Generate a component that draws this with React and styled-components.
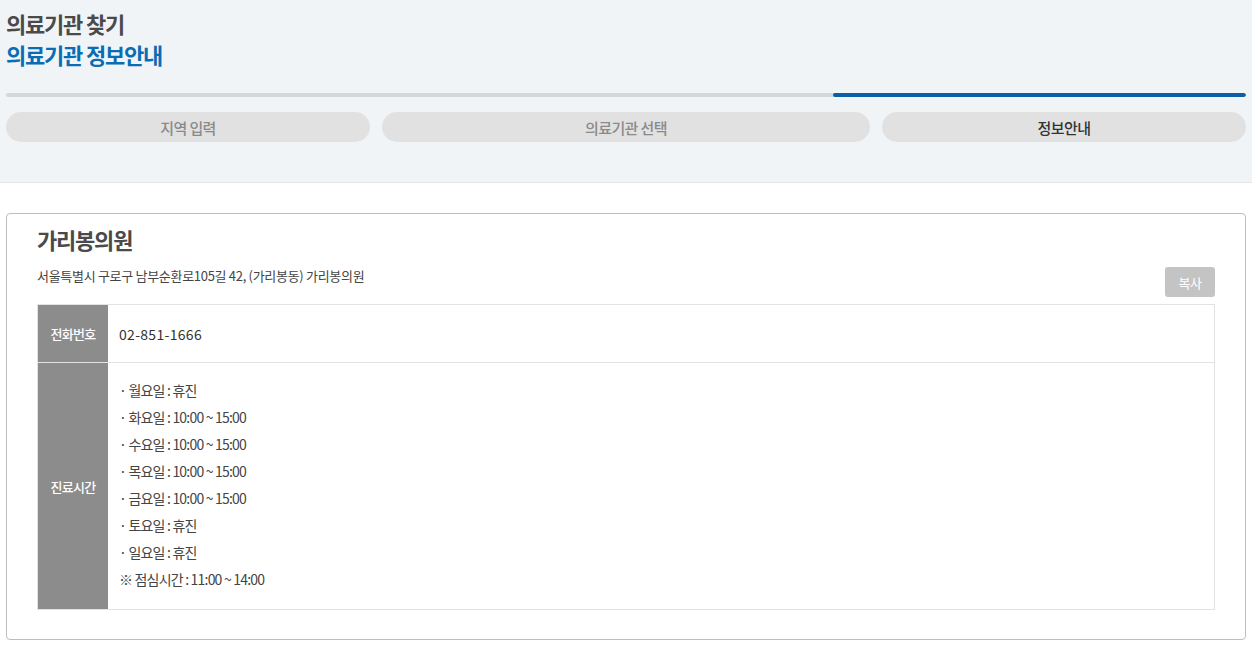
import React from "react";
import styled, { createGlobalStyle } from "styled-components";

const GlobalStyle = createGlobalStyle`
  body {
    margin: 0;
    background: #fff;
    font-family: "Noto Sans CJK KR", "Noto Sans", sans-serif;
    color: #444;
  }
`;

const Header = styled.header`
  background: #f1f4f7;
  border-bottom: 1px solid #e3e6ea;
  padding: 8px 6px 40px;
  height: 134px;
`;

const Title = styled.h1`
  margin: 0;
  font-size: 22px;
  font-weight: 700;
  line-height: 31px;
  letter-spacing: -1.2px;
  color: ${(props) => (props.accent ? "#0a6db3" : "#4a4a4a")};
`;

const Progress = styled.div`
  display: flex;
  height: 4px;
  margin-top: 23px;
  border-radius: 2px;
  overflow: hidden;
  background: #d6d6d8;
`;

const ProgressFill = styled.div`
  margin-left: auto;
  background: #0b5ea8;
  border-radius: 2px;
`;

const Steps = styled.div`
  display: flex;
  gap: 12px;
  margin-top: 15px;
`;

const Step = styled.div`
  flex: ${(props) => props.grow};
  height: 30px;
  border-radius: 15px;
  background: #e1e1e1;
  display: flex;
  align-items: center;
  justify-content: center;
  font-size: 15px;
  letter-spacing: -0.6px;
  color: ${(props) => (props.active ? "#333" : "#8a8a8a")};
  font-weight: 500;
`;

const Card = styled.section`
  margin: 30px 6px 0;
  border: 1px solid #bdbdbd;
  border-radius: 4px;
  padding: 10px 30px 29px;
`;

const Name = styled.h2`
  margin: 0;
  font-size: 22px;
  font-weight: 700;
  line-height: 30px;
  letter-spacing: -1.2px;
  color: #4a4a4a;
`;

const AddressRow = styled.div`
  display: flex;
  align-items: flex-start;
  justify-content: space-between;
  margin-top: 8px;
  height: 42px;
`;

const Address = styled.p`
  margin: 4px 0 0;
  font-size: 13px;
  letter-spacing: -0.3px;
  color: #444;
`;

const CopyButton = styled.button`
  margin-top: 5px;
  width: 50px;
  height: 30px;
  border: none;
  border-radius: 3px;
  background: #c4c4c4;
  color: #fff;
  font-family: inherit;
  font-size: 13px;
  letter-spacing: -0.5px;
`;

const InfoTable = styled.table`
  width: 100%;
  border-collapse: collapse;
  border: 1px solid #e3e3e3;
`;

const Th = styled.th`
  width: 70px;
  padding: 0;
  background: #8c8c8c;
  color: #fff;
  font-size: 13px;
  font-weight: 500;
  letter-spacing: -0.7px;
  border-bottom: 1px solid #e3e3e3;
`;

const Td = styled.td`
  padding: ${(props) => (props.tall ? "14px 11px 16px" : "0 11px")};
  height: ${(props) => (props.tall ? "auto" : "57px")};
  font-size: 14px;
  color: #333;
  border-bottom: 1px solid #e3e3e3;
`;

const Phone = styled.span`
  letter-spacing: 0.3px;
`;

const Line = styled.div`
  line-height: 27px;
  font-size: 14px;
  letter-spacing: -0.8px;
  color: #444;
`;

const schedule = [
  "· 월요일 : 휴진",
  "· 화요일 : 10:00 ~ 15:00",
  "· 수요일 : 10:00 ~ 15:00",
  "· 목요일 : 10:00 ~ 15:00",
  "· 금요일 : 10:00 ~ 15:00",
  "· 토요일 : 휴진",
  "· 일요일 : 휴진",
  "※ 점심시간 : 11:00 ~ 14:00",
];

const App = () => {
  return (
    <>
      <GlobalStyle />
      <Header>
        <Title>의료기관 찾기</Title>
        <Title accent>의료기관 정보안내</Title>
        <Progress>
          <ProgressFill style={{ width: `${(413 / 1240) * 100}%` }} />
        </Progress>
        <Steps>
          <Step grow={364}>지역 입력</Step>
          <Step grow={488}>의료기관 선택</Step>
          <Step grow={364} active>
            정보안내
          </Step>
        </Steps>
      </Header>
      <Card>
        <Name>가리봉의원</Name>
        <AddressRow>
          <Address>서울특별시 구로구 남부순환로105길 42, (가리봉동) 가리봉의원</Address>
          <CopyButton>복사</CopyButton>
        </AddressRow>
        <InfoTable>
          <tbody>
            <tr>
              <Th>전화번호</Th>
              <Td>
                <Phone>02-851-1666</Phone>
              </Td>
            </tr>
            <tr>
              <Th>진료시간</Th>
              <Td tall>
                {schedule.map((s) => (
                  <Line key={s}>{s}</Line>
                ))}
              </Td>
            </tr>
          </tbody>
        </InfoTable>
      </Card>
    </>
  );
};

export default App;
